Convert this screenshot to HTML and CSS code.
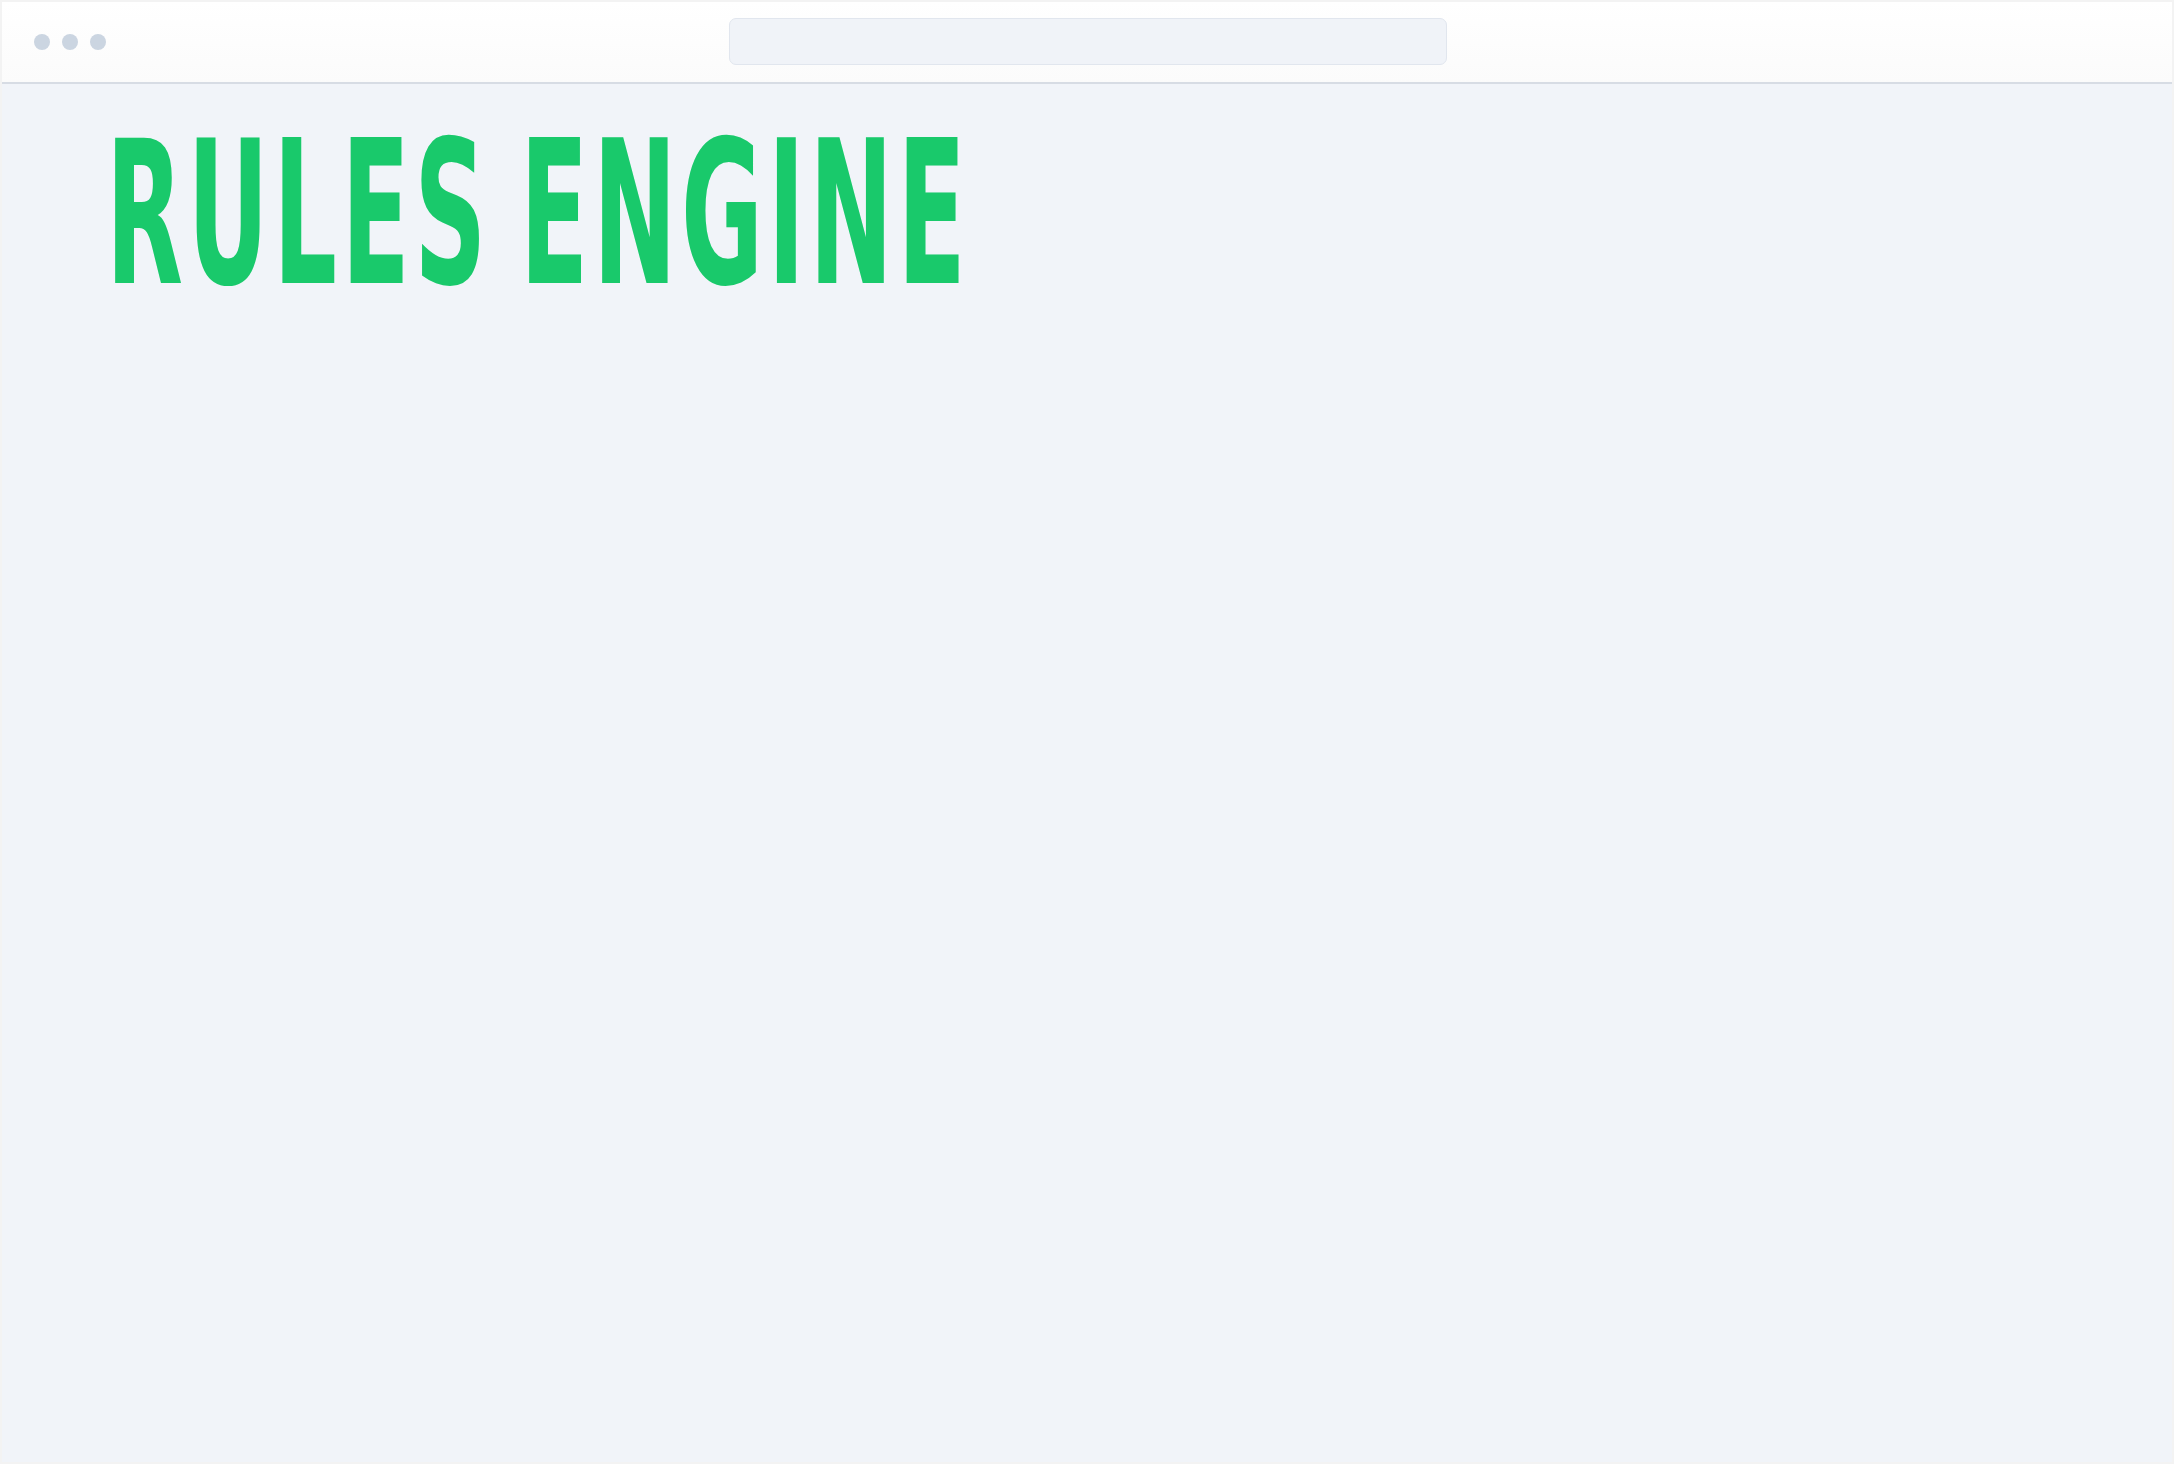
FILE: index.html
```html
<!DOCTYPE html>
<html>
<head>
<meta charset="utf-8">
<link rel="stylesheet" href="styles.css">
</head>
<body>
<div class="window">
  <header class="topbar">
    <div class="dots"><span class="dot"></span><span class="dot"></span><span class="dot"></span></div>
    <div class="address"></div>
  </header>
  <main class="content">
    <h1 class="title"><span class="title-text">RULES ENGINE</span></h1>
  </main>
</div>
</body>
</html>
```
FILE: styles.css
```css
html, body { margin: 0; padding: 0; }
body {
  background: #f3f3f3;
  width: 2174px;
  height: 1464px;
  overflow: hidden;
}
.window {
  margin: 2px;
  height: 1460px;
  background: #f1f4f9;
  display: flex;
  flex-direction: column;
}
.topbar {
  height: 80px;
  border-bottom: 2px solid #d7dce4;
  background: linear-gradient(#ffffff, #fbfbfb);
  display: flex;
  align-items: center;
  position: relative;
  padding-left: 32px;
}
.dots { display: flex; gap: 12px; }
.dot {
  width: 16px; height: 16px; border-radius: 50%;
  background: #cbd5e1;
}
.address {
  position: absolute;
  left: 727px;
  top: 16px;
  width: 716px;
  height: 45px;
  background: #f0f3f8;
  border: 1.5px solid #e1e6ee;
  border-radius: 7px;
}
.content {
  padding: 30px 0 0 104px;
}
.title {
  margin: 0;
  font-family: "DejaVu Sans", sans-serif;
  font-weight: bold;
  font-size: 200px;
  line-height: 1;
  letter-spacing: 9px;
  word-spacing: -20px;
  color: #19c96b;
}
.title-text {
  display: inline-block;
  transform: scaleX(0.5);
  transform-origin: left top;
  white-space: nowrap;
}
```
